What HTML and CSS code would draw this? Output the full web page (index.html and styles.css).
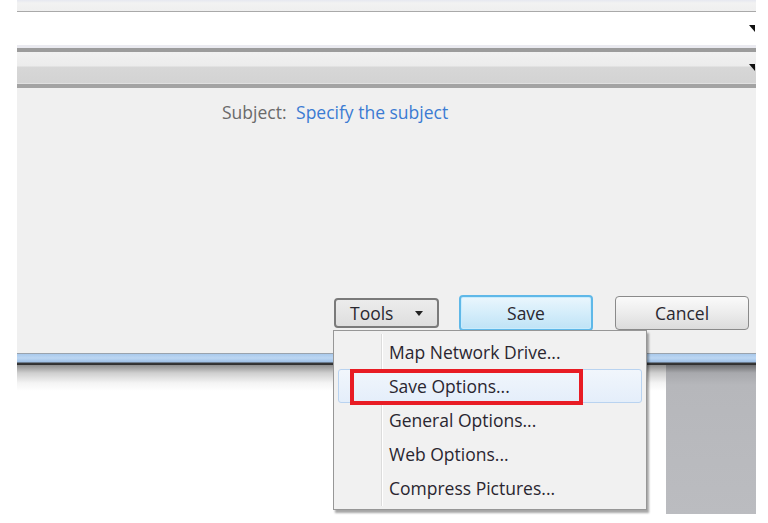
FILE: index.html
```html
<!DOCTYPE html>
<html>
<head>
<meta charset="utf-8">
<link rel="stylesheet" href="styles.css">
</head>
<body>
<div class="window">
  <div class="top-strip"></div>
  <div class="field"><span class="caret"></span></div>
  <div class="sep"></div>
  <div class="combo"><span class="caret"></span></div>
  <div class="sep2"></div>
  <div class="body">
    <div class="subject">
      <span class="label">Subject:</span>
      <span class="value">Specify the subject</span>
    </div>
    <div class="buttons">
      <button class="btn tools"><span>Tools</span><span class="arrow"></span></button>
      <button class="btn save">Save</button>
      <button class="btn cancel">Cancel</button>
    </div>
  </div>
  <div class="frame-bottom"></div>
</div>
<div class="below">
  <div class="shadow-area"></div>
  <div class="panel"></div>
</div>

<div class="menu">
  <div class="item">Map Network Drive...</div>
  <div class="item hot">Save Options...</div>
  <div class="item">General Options...</div>
  <div class="item">Web Options...</div>
  <div class="item">Compress Pictures...</div>
</div>
<div class="redbox"></div>
</body>
</html>
```
FILE: styles.css
```css
* { box-sizing: border-box; }
html, body { margin: 0; padding: 0; }
body {
  width: 768px;
  height: 523px;
  overflow: hidden;
  background: #ffffff;
  font-family: "Open Sans", "Noto Sans", sans-serif;
  position: relative;
}
.window {
  margin-left: 17px;
  width: 739px;
}
.top-strip {
  height: 12px;
  background: linear-gradient(#e6e8f0 0, #f2f2f2 3px, #efefef 100%);
  border-bottom: 1px solid #a9a9a9;
}
.field {
  height: 33px;
  background: #ffffff;
  display: flex;
  justify-content: flex-end;
  align-items: center;
}
.caret {
  width: 0;
  height: 0;
  border-top: 7px solid #111;
  border-left: 6px solid transparent;
  margin-right: 1px;
}
.sep {
  height: 7px;
  border-top: 3px solid #eaeaf0;
  background: #9c9c9c;
}
.combo {
  height: 31px;
  background: linear-gradient(#f1f1f1 0, #ececec 14px, #d7d7d7 15px, #d3d3d3 100%);
  display: flex;
  justify-content: flex-end;
  align-items: flex-start;
  padding-top: 12px;
}
.sep2 {
  height: 5px;
  border-top: 1px solid #e0e0e0;
  background: #a3a3a3;
}
.body {
  height: 265px;
  background: #f0f0f0;
  position: relative;
}
.subject {
  padding-top: 12px;
  padding-left: 205px;
  font-size: 17.5px;
  line-height: 24px;
}
.label { color: #6a6a6a; margin-right: 5px; }
.value { color: #3b7bd3; }
.buttons {
  position: absolute;
  left: 317px;
  top: 207px;
  display: flex;
  align-items: center;
}
.btn {
  font-family: "Open Sans", "Noto Sans", sans-serif;
  font-size: 17.5px;
  color: #2a2830;
  padding: 0;
  border-radius: 4px;
}
.tools {
  width: 105px;
  height: 30px;
  border: 2px solid #7a7a7a;
  background: linear-gradient(#ececec, #dedede);
  display: flex;
  align-items: center;
  padding-left: 14px;
  gap: 22px;
}
.arrow {
  width: 0; height: 0;
  border-left: 4px solid transparent;
  border-right: 4px solid transparent;
  border-top: 5px solid #222;
}
.save {
  margin-left: 20px;
  width: 134px;
  height: 36px;
  border: 2px solid #5fb8e8;
  background: linear-gradient(#eaf6fd, #d4edfa 50%, #bfe3f6 100%);
  box-shadow: inset 0 0 0 1px #c8ecfd;
}
.cancel {
  margin-left: 22px;
  width: 134px;
  height: 34px;
  border: 1.5px solid #8a8a8a;
  background: linear-gradient(#fafafa, #ececec 50%, #dcdcdc 100%);
}
.frame-bottom {
  height: 12px;
  border-top: 1px solid #9aa3ad;
  background: linear-gradient(#a9c9ec 0, #bcd6f2 4px, #9fc0e6 8px, #3a3a3a 9px, #2e2e2e 100%);
}
.below {
  margin-left: 17px;
  width: 739px;
  display: flex;
  height: 149px;
}
.shadow-area {
  flex: 1;
  background: linear-gradient(#8e8e8e 0, #cfcfcf 8px, #f4f4f4 18px, #ffffff 26px);
}
.panel {
  width: 90px;
  background: linear-gradient(#6c6d70 0, #a8a9ad 8px, #b6b7bb 20px, #bbbcc0 100%);
}
.menu {
  position: absolute;
  left: 333px;
  top: 330px;
  width: 314px;
  height: 180px;
  background: #f1f1f1;
  border: 1px solid #979797;
  box-shadow: 2px 3px 2px rgba(0,0,0,0.35);
  padding: 4px 4px 5px 4px;
}
.menu::before {
  content: "";
  position: absolute;
  left: 47px;
  top: 3px;
  bottom: 3px;
  width: 1px;
  background: #dcdcdc;
  border-right: 1px solid #ffffff;
}
.item {
  height: 34px;
  line-height: 32px;
  padding-left: 50px;
  font-size: 17.5px;
  color: #2a2630;
  border: 1px solid transparent;
  border-radius: 3px;
  position: relative;
}
.item.hot {
  border-color: #b9d3f0;
  background: linear-gradient(#f1f6fc, #e4eefa);
}
.redbox {
  position: absolute;
  left: 350px;
  top: 369px;
  width: 233px;
  height: 36px;
  border: 4px solid #e81c24;
}
```
